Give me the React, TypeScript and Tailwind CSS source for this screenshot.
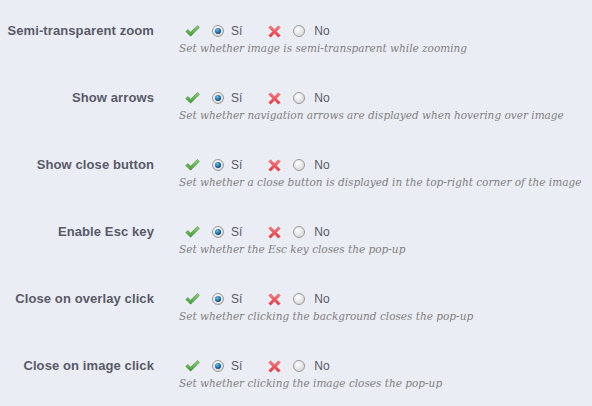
import React from "react";

const rows = [
  { label: "Semi-transparent zoom", hint: "Set whether image is semi-transparent while zooming" },
  { label: "Show arrows", hint: "Set whether navigation arrows are displayed when hovering over image" },
  { label: "Show close button", hint: "Set whether a close button is displayed in the top-right corner of the image" },
  { label: "Enable Esc key", hint: "Set whether the Esc key closes the pop-up" },
  { label: "Close on overlay click", hint: "Set whether clicking the background closes the pop-up" },
  { label: "Close on image click", hint: "Set whether clicking the image closes the pop-up" },
];

const CheckIcon = () => (
  <svg width="15" height="12" viewBox="0 0 15 12" className="block">
    <defs>
      <linearGradient id="chk" x1="0" y1="0" x2="0" y2="1">
        <stop offset="0" stopColor="#8fd77c" />
        <stop offset="1" stopColor="#3e9a34" />
      </linearGradient>
    </defs>
    <path d="M0.8 6.4 L3 4.6 L5.6 7.2 L12.4 0.6 L14.3 2.4 L5.6 11.2 Z" fill="url(#chk)" stroke="#3c8a33" strokeWidth="0.6" strokeLinejoin="round" />
  </svg>
);

const CrossIcon = () => (
  <svg width="13" height="13" viewBox="0 0 13 13" className="block">
    <defs>
      <linearGradient id="crs" x1="0" y1="0" x2="0" y2="1">
        <stop offset="0" stopColor="#ff7a80" />
        <stop offset="1" stopColor="#e8343c" />
      </linearGradient>
    </defs>
    <path d="M0.8 2.6 L2.6 0.8 L6.5 4.7 L10.4 0.8 L12.2 2.6 L8.3 6.5 L12.2 10.4 L10.4 12.2 L6.5 8.3 L2.6 12.2 L0.8 10.4 L4.7 6.5 Z" fill="url(#crs)" stroke="#d9464c" strokeWidth="0.5" strokeLinejoin="round" />
  </svg>
);

const Radio = ({ checked }: { checked?: boolean }) => (
  <svg width="12" height="12" viewBox="0 0 12 12" className="block">
    <defs>
      <radialGradient id="rbg" cx="0.4" cy="0.35" r="0.7">
        <stop offset="0" stopColor="#ffffff" />
        <stop offset="1" stopColor="#d4d4d4" />
      </radialGradient>
      <radialGradient id="rdot" cx="0.4" cy="0.35" r="0.7">
        <stop offset="0" stopColor="#6ec3f0" />
        <stop offset="0.6" stopColor="#1a6fa8" />
        <stop offset="1" stopColor="#0d3f66" />
      </radialGradient>
    </defs>
    <circle cx="6" cy="6" r="5.5" fill="url(#rbg)" stroke="#9a9a9a" strokeWidth="1" />
    {checked && <circle cx="6" cy="6" r="3" fill="url(#rdot)" />}
  </svg>
);

export default function App() {
  return (
    <div className="min-h-[406px] w-[592px] bg-[#ebedf4] pt-[22px] font-['Liberation_Sans',Arial,sans-serif]">
      {rows.map((r) => (
        <div key={r.label} className="flex h-[67px]">
          <div className="w-[154px] shrink-0 text-right text-[13px] font-bold leading-[18px] tracking-[0.1px] text-[#585a69]">
            {r.label}
          </div>
          <div className="ml-[25px] flex flex-col">
            <div className="flex h-[18px] items-center text-[12px] text-[#585a69]">
              <span className="ml-[6px]"><CheckIcon /></span>
              <span className="ml-[12px]"><Radio checked /></span>
              <span className="ml-[7px]">Sí</span>
              <span className="ml-[26px]"><CrossIcon /></span>
              <span className="ml-[12px]"><Radio /></span>
              <span className="ml-[9px]">No</span>
            </div>
            <p className="mt-[1px] whitespace-nowrap font-['DejaVu_Serif',Georgia,serif] text-[10.5px] italic leading-[14px] text-[#7f7f7f]">
              {r.hint}
            </p>
          </div>
        </div>
      ))}
    </div>
  );
}
